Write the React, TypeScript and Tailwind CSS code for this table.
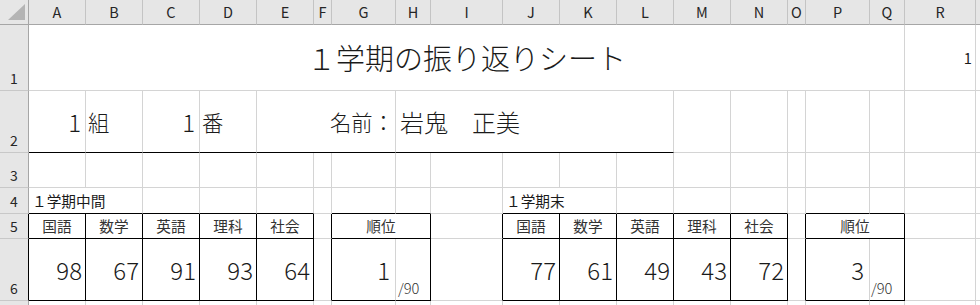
import React from "react";

const COLS = ["A", "B", "C", "D", "E", "F", "G", "H", "I", "J", "K", "L", "M", "N", "O", "P", "Q", "R"];

type CP = {
  span?: number;
  r?: boolean;
  b?: boolean;
  className?: string;
  children?: React.ReactNode;
};

function C({ span = 1, r = false, b = false, className = "", children }: CP) {
  const s =
    span === 2 ? "col-span-2" : span === 3 ? "col-span-3" : span === 5 ? "col-span-5" : span === 17 ? "col-span-17" : "";
  const rc = r ? "border-r border-r-black" : "border-r border-r-[#d4d4d4]";
  const bc = b ? "border-b border-b-black" : "border-b border-b-[#d4d4d4]";
  return <div className={`${s} ${rc} ${bc} flex items-center whitespace-nowrap ${className}`}>{children}</div>;
}

function RH({ n, k = false }: { n: string; k?: boolean }) {
  const rc = k ? "border-r border-r-black" : "border-r border-r-[#a6a6a6]";
  return (
    <div
      className={`bg-[#e6e6e6] border-b border-b-[#c8c8c8] ${rc} flex items-end justify-center pb-[3px] text-[14px] leading-[18px] text-[#262626]`}
    >
      {n}
    </div>
  );
}

function Blank({ count }: { count: number }) {
  return (
    <>
      {Array.from({ length: count }).map((_, i) => (
        <C key={i} />
      ))}
    </>
  );
}

function Head({ t }: { t: string }) {
  return (
    <C r b className="justify-center text-[14.67px] text-[#333]">
      {t}
    </C>
  );
}

function Score({ v }: { v: number }) {
  return (
    <C r b className="justify-end pr-[3px] text-[24px] font-light text-[#1a1a1a]">
      {v}
    </C>
  );
}

export default function App() {
  const mid = [98, 67, 91, 93, 64];
  const fin = [77, 61, 49, 43, 72];
  const subj = ["国語", "数学", "英語", "理科", "社会"];
  return (
    <div className="w-[980px] h-[305px] overflow-hidden bg-white font-['Noto_Sans_CJK_JP','Noto_Sans',sans-serif] text-[#1a1a1a]">
      <div className="grid grid-cols-[29px_57px_57px_57px_57px_57px_18px_64px_35px_72px_57px_57px_57px_57px_57px_18px_64px_35px_71px_60px] grid-rows-[25px_66px_62px_35px_26px_25px_62px_40px] w-[1040px]">
        {/* header row */}
        <div className="relative bg-[#e6e6e6] border-r border-r-[#a6a6a6] border-b border-b-[#a6a6a6]">
          <svg className="absolute left-0 top-0" width="28" height="24" viewBox="0 0 28 24">
            <polygon points="8,20 25,20 25,4" fill="#b4b4b4" />
          </svg>
        </div>
        {COLS.map((c) => (
          <div
            key={c}
            className="bg-[#e6e6e6] border-r border-r-[#c4c4c4] border-b border-b-[#a6a6a6] flex items-center justify-center text-[14.5px] text-[#262626]"
          >
            {c}
          </div>
        ))}
        <div className="bg-[#e6e6e6] border-b border-b-[#a6a6a6]" />

        {/* row 1 */}
        <RH n="1" />
        <C span={17} className="justify-center text-[29px] font-light text-[#1a1a1a]">
          １学期の振り返りシート
        </C>
        <C className="justify-end pr-[3px] text-[14.67px]">1</C>
        <C />

        {/* row 2 */}
        <RH n="2" />
        <C b className="justify-end pr-[4px] text-[24px] font-light">
          1
        </C>
        <C b className="pl-[2px] text-[21.33px] font-light">
          組
        </C>
        <C b className="justify-end pr-[4px] text-[24px] font-light">
          1
        </C>
        <C b className="pl-[2px] text-[21.33px] font-light">
          番
        </C>
        <C span={3} b className="justify-end pr-[1px] text-[21.33px] font-light">
          名前：
        </C>
        <C span={5} b className="pl-[4px] text-[24px] font-light">
          岩鬼　正美
        </C>
        <Blank count={7} />

        {/* row 3 */}
        <RH n="3" />
        <Blank count={19} />

        {/* row 4 */}
        <RH n="4" />
        <C span={2} b className="pl-[3px] text-[14.67px]">
          １学期中間
        </C>
        <C b />
        <C b />
        <C b />
        <C />
        <C b />
        <C b />
        <C />
        <C span={2} b className="pl-[3px] text-[14.67px]">
          １学期末
        </C>
        <C b />
        <C b />
        <C b />
        <C />
        <C b />
        <C b />
        <C />
        <C />

        {/* row 5 */}
        <RH n="5" k />
        {subj.map((s) => (
          <Head key={"a" + s} t={s} />
        ))}
        <C r />
        <C span={2} r b className="justify-center text-[14.67px] text-[#333]">
          順位
        </C>
        <C r />
        {subj.map((s) => (
          <Head key={"b" + s} t={s} />
        ))}
        <C r />
        <C span={2} r b className="justify-center text-[14.67px] text-[#333]">
          順位
        </C>
        <C />
        <C />

        {/* row 6 */}
        <RH n="6" k />
        {mid.map((v, i) => (
          <Score key={"m" + i} v={v} />
        ))}
        <C r />
        <C b className="justify-end pr-[5px] text-[24px] font-light">
          1
        </C>
        <C r b className="items-end pl-[2px] pb-[1px] text-[14.67px] font-light text-[#333]">
          /90
        </C>
        <C r />
        {fin.map((v, i) => (
          <Score key={"f" + i} v={v} />
        ))}
        <C r />
        <C b className="justify-end pr-[5px] text-[24px] font-light">
          3
        </C>
        <C r b className="items-end pl-[1px] pb-[1px] text-[14.67px] font-light text-[#333]">
          /90
        </C>
        <C />
        <C />

        {/* row 7 */}
        <div className="bg-[#e6e6e6] border-r border-r-[#a6a6a6]" />
        <Blank count={19} />
      </div>
    </div>
  );
}
